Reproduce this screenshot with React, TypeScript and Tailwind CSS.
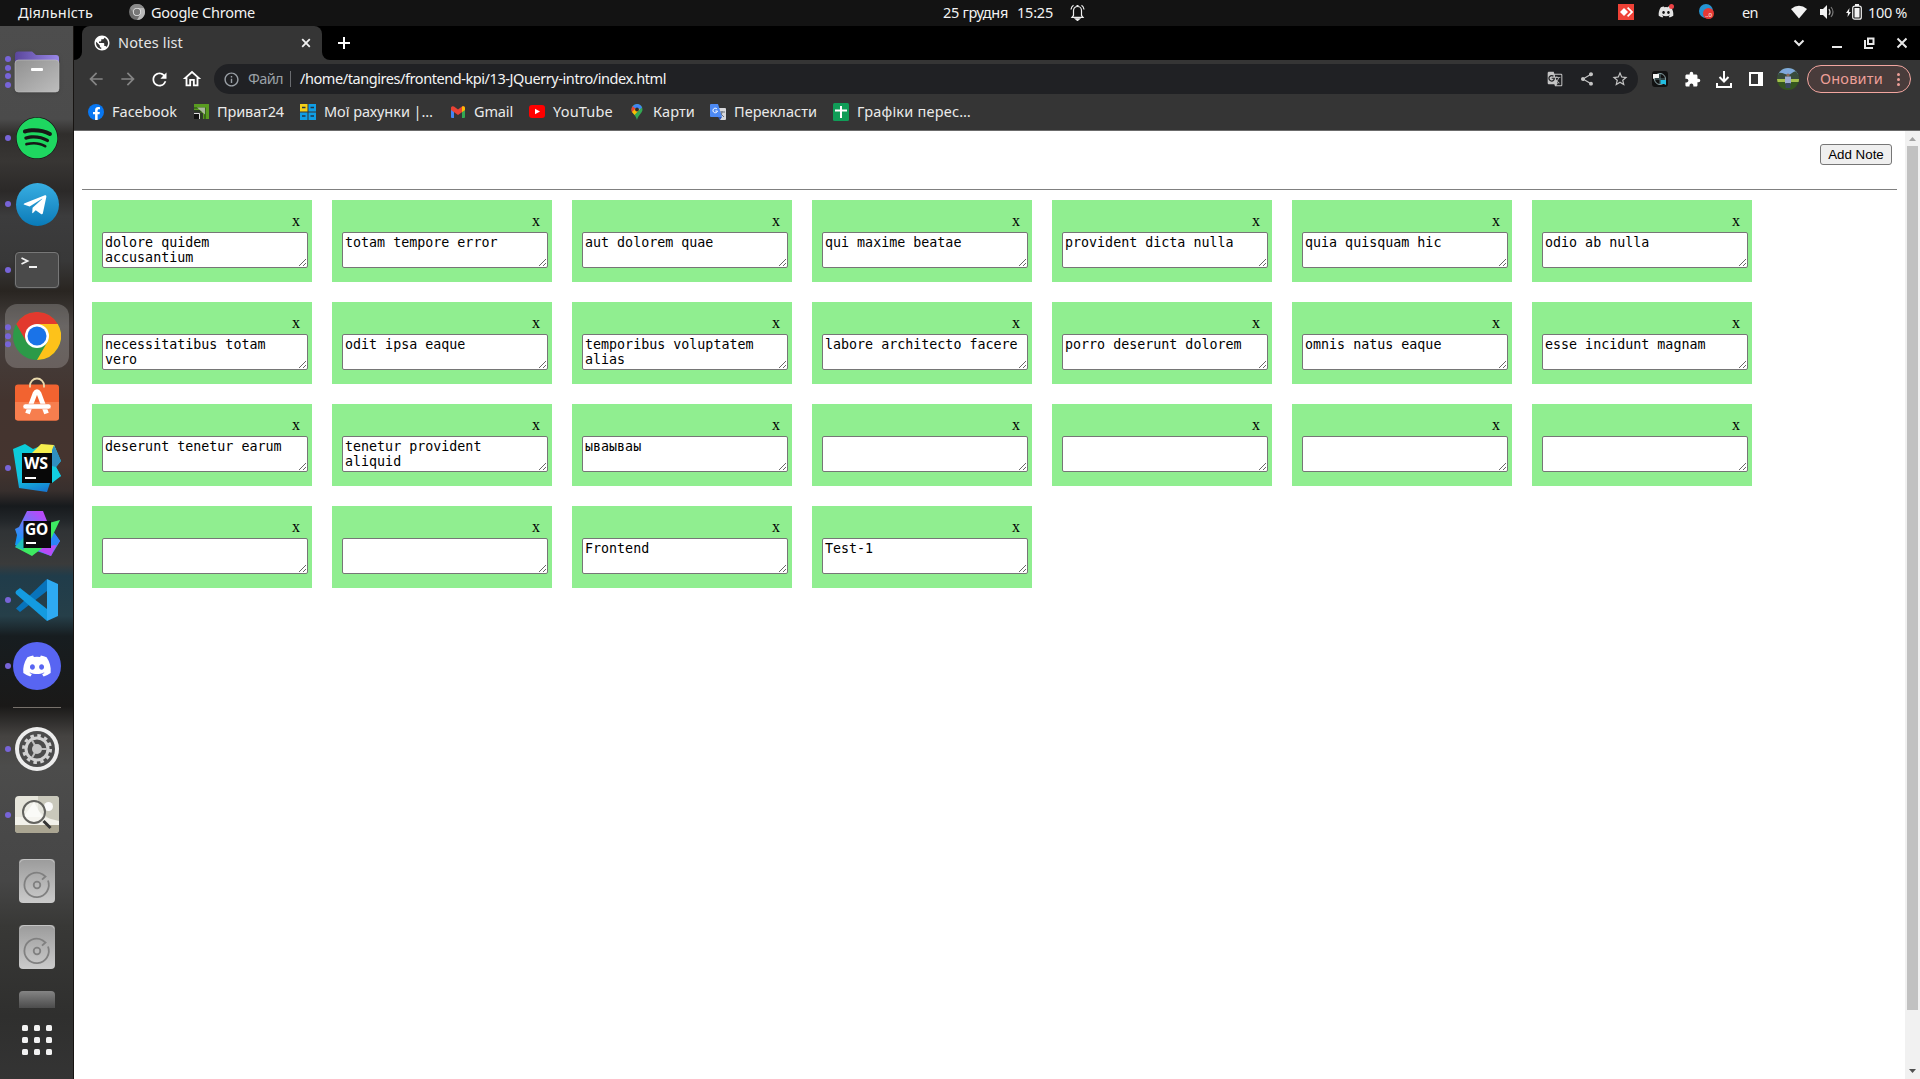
import React, { useLayoutEffect, useRef } from "react";
import { FaSpotify, FaTelegramPlane, FaDiscord, FaFacebookF } from "react-icons/fa";
import {
  MdGTranslate,
  MdShare,
  MdStarBorder,
  MdExtension,
  MdInfoOutline,
  MdRefresh,
  MdArrowBack,
  MdArrowForward,
  MdOutlineHome,
  MdPublic,
} from "react-icons/md";

const notes: string[] = [
  "dolore quidem accusantium",
  "totam tempore error",
  "aut dolorem quae",
  "qui maxime beatae",
  "provident dicta nulla",
  "quia quisquam hic",
  "odio ab nulla",
  "necessitatibus totam vero",
  "odit ipsa eaque",
  "temporibus voluptatem alias",
  "labore architecto facere",
  "porro deserunt dolorem",
  "omnis natus eaque",
  "esse incidunt magnam",
  "deserunt tenetur earum",
  "tenetur provident aliquid",
  "ываываы",
  "",
  "",
  "",
  "",
  "",
  "",
  "Frontend",
  "Test-1",
];

/* A label whose tracking is adjusted so that it fills the given width. */
function Label({ children, width, className = "" }: { children: string; width: number; className?: string }) {
  const ref = useRef<HTMLSpanElement>(null);
  useLayoutEffect(() => {
    const el = ref.current;
    if (!el) return;
    el.style.letterSpacing = "0px";
    const natural = el.getBoundingClientRect().width;
    el.style.letterSpacing = `${(width - natural) / children.length}px`;
  }, [children, width]);
  return (
    <span className="block shrink-0" style={{ width }}>
      <span ref={ref} className={"inline-block whitespace-pre " + className}>
        {children}
      </span>
    </span>
  );
}

function ChromeLogo({ size, mono = false }: { size: number; mono?: boolean }) {
  const c = mono ? ["#8b8b8b", "#6f6f6f", "#b9b9b9", "#777", "#e4e4e4"] : ["#e2392e", "#2c9a48", "#fdc21a", "#1a73e8", "#fff"];
  return (
    <svg width={size} height={size} viewBox="0 0 48 48">
      <circle cx="24" cy="24" r="24" fill={c[1]} />
      <path d="M3.2 12A24 24 0 0 1 44.8 12L24 12 13.6 30Z" fill={c[0]} />
      <path d="M44.8 12A24 24 0 0 1 24 48L34.4 30 24 12Z" fill={c[2]} />
      <circle cx="24" cy="24" r="12" fill={c[4]} />
      <circle cx="24" cy="24" r="9.5" fill={c[3]} />
    </svg>
  );
}

function TopBar() {
  return (
    <header className="flex h-[26px] shrink-0 items-center bg-[#131313] text-[14.5px] leading-[24px] text-[#f2f2f2]">
      <div className="ml-[18px] w-[111px] pb-0.5">
        <Label width={75}>Діяльність</Label>
      </div>
      <div className="mr-1.5 flex h-4 w-4 -translate-y-px items-center">
        <ChromeLogo size={16} mono />
      </div>
      <div className="pb-0.5">
        <Label width={104}>Google Chrome</Label>
      </div>
      <div className="ml-[688px] flex pb-0.5">
        <Label width={65}>25 грудня</Label>
        <span className="w-[9px]" />
        <Label width={36}>15:25</Label>
      </div>
      <svg className="ml-[17px] -translate-y-px" width="15" height="17" viewBox="0 0 15 17" fill="none" stroke="#eee" strokeWidth="1.2">
        <path d="M3.5 11.5V6.5a4 4 0 0 1 8 0v5l1.5 1.8H2z" />
        <path d="M1 5.5Q1.3 2.6 3.5 1.2M14 5.5Q13.7 2.6 11.500 1.2M6.500 1.500h2" />
        <path d="M5.500 14.800h4L7.500 16.500z" fill="#eee" />
      </svg>
      <div className="ml-[533px] flex h-4 w-4 -translate-y-px items-center justify-center bg-[#ef4136]">
        <svg width="14" height="10" viewBox="0 0 14 10" fill="#fff">
          <path d="M5 1l4 4-4 4-4-4z" />
          <path d="M8 1.200l1.200-1.200 5 5-5 5L8 8.800 11.800 5z" />
        </svg>
      </div>
      <div className="relative ml-6 h-4 w-4 -translate-y-px">
        <FaDiscord size={16} color="#e3e3e3" />
        <span className="absolute right-0 top-0 h-[5px] w-[5px] rounded-full bg-[#ed4245]" />
      </div>
      <div className="relative ml-[25px] h-4 w-4">
        <span className="absolute -top-px left-0 h-[14px] w-[14px] rounded-full bg-[#2594d2]" />
        <span className="absolute left-1 top-[3px] flex h-[11px] w-[11px] items-end justify-center rounded-full bg-[#e53935] text-[6px] leading-[8px] text-white">
          ..0
        </span>
      </div>
      <div className="ml-[27px] w-[49px] pb-0.5">
        <Label width={16}>en</Label>
      </div>
      <svg className="-translate-y-px" width="16" height="14" viewBox="0 0 16 14" fill="#f2f2f2">
        <path d="M0 4Q8-2.500 16 4L8 13.500z" />
      </svg>
      <svg className="ml-[12px] -translate-y-px" width="16" height="16" viewBox="0 0 16 16">
        <path d="M1 5h3l4-4v14l-4-4H1z" fill="#f2f2f2" />
        <path d="M10 5q2 3 0 6" stroke="#ccc" strokeWidth="1.200" fill="none" />
        <path d="M12 3q4 5 0 10" stroke="#777" strokeWidth="1.200" fill="none" />
      </svg>
      <svg className="ml-2.5 -translate-y-px" width="18" height="16" viewBox="0 0 18 16">
        <path d="M4.500 4L1 9h2l-.5 4L6 8H4z" fill="#f2f2f2" />
        <rect x="7.700" y="2.200" width="8.600" height="13" rx="2" fill="none" stroke="#f2f2f2" strokeWidth="1.200" />
        <rect x="9.500" y="4" width="5" height="9.500" fill="#f2f2f2" />
        <rect x="10" y="0" width="4" height="2" fill="#f2f2f2" />
      </svg>
      <div className="ml-[5px] pb-0.5">
        <Label width={39}>100 %</Label>
      </div>
    </header>
  );
}

function Dots({ n }: { n: number }) {
  return (
    <span className="absolute left-[5px] top-1/2 flex -translate-y-1/2 flex-col gap-[2.700px]">
      {Array.from({ length: n }, (_, i) => (
        <span key={i} className="block h-1.5 w-1.5 rounded-full bg-[#7764d8]" />
      ))}
    </span>
  );
}

function DockItem({ dots = 0, active = false, children }: { dots?: number; active?: boolean; children: React.ReactNode }) {
  return (
    <div className="relative flex h-[66px] w-[74px] shrink-0 items-center justify-center">
      <span className={"flex h-16 w-16 items-center justify-center rounded-xl " + (active ? "bg-white/20" : "")}>{children}</span>
      <Dots n={dots} />
    </div>
  );
}

function Disk() {
  return (
    <svg width="36" height="44" viewBox="0 0 36 44">
      <defs>
        <linearGradient id="disk" x1="0" y1="0" x2="0" y2="1">
          <stop offset="0" stopColor="#9b9b9b" />
          <stop offset="1" stopColor="#cbcbcb" />
        </linearGradient>
      </defs>
      <rect width="36" height="44" rx="4" fill="url(#disk)" />
      <path d="M1 3.500Q2 .5 5 .5h26q3 0 4 3" stroke="#c4c4c4" fill="none" />
      <path d="M29 21.500A12.200 12.200 0 1 1 23.500 15.200l3 2.300-3.500 3.200" fill="none" stroke="#808080" strokeWidth="1.800" />
      <circle cx="18" cy="26" r="3.300" fill="none" stroke="#808080" strokeWidth="1.800" />
    </svg>
  );
}

function Gear() {
  return (
    <svg width="46" height="46" viewBox="0 0 46 46">
      <circle cx="23" cy="23" r="22" fill="#ededed" />
      <circle cx="23" cy="23" r="18" fill="#4c4c4c" />
      <circle cx="23" cy="23" r="13.500" fill="none" stroke="#d2d2d2" strokeWidth="3" strokeDasharray="3.530 3.530" />
      <circle cx="23" cy="23" r="11" fill="none" stroke="#d2d2d2" strokeWidth="3" />
      <path d="M23 23H33M23 23l-5-8.700M23 23l-5 8.700" stroke="#bdbdbd" strokeWidth="2" />
      <circle cx="23" cy="23" r="5" fill="#c7c7c7" />
    </svg>
  );
}

function Dock() {
  return (
    <aside className="flex w-[74px] shrink-0 flex-col border-r border-[#171412] bg-[linear-gradient(180deg,#4d4d4d_0px,#4b4b4b_93px,#302e2c_108px,#383634_135px,#2b2928_165px,#3c3c3d_190px,#383838_235px,#292521_265px,#45403e_300px,#43342f_375px,#45342f_440px,#372f2d_465px,#171a1d_480px,#23272a_495px,#303335_505px,#3a3b3b_538px,#203c4a_550px,#263f49_590px,#171d20_610px,#1a1918_680px,#454341_710px,#4c4c4b_740px,#494949_790px,#464646_855px,#383836_900px,#2f2f2e_990px,#343434_1053px)] pt-[13px]">
      <DockItem dots={4}>
        <svg width="46" height="44" viewBox="0 0 46 44" className="drop-shadow">
          <defs>
            <linearGradient id="folder" x1="0" y1="0" x2="1" y2="1">
              <stop stopColor="#919191" />
              <stop offset="1" stopColor="#bdbdbd" />
            </linearGradient>
            <linearGradient id="back" x1="0" x2="1">
              <stop stopColor="#5a469b" />
              <stop offset="1" stopColor="#9988e8" />
            </linearGradient>
          </defs>
          <path d="M1 20V5q0-3.500 3-3.500h14l4 3.500h20q3 0 3 3v12z" fill="url(#back)" />
          <rect x="1" y="10" width="44" height="32" rx="3.500" fill="url(#folder)" stroke="#c2c2c2" strokeWidth=".6" />
          <rect x="17" y="18" width="12" height="3" rx="1" fill="#fff" />
        </svg>
      </DockItem>
      <DockItem dots={1}>
        <span className="flex h-[42px] w-[42px] items-center justify-center rounded-full bg-[#171717]">
          <FaSpotify size={42} color="#1ed760" />
        </span>
      </DockItem>
      <DockItem dots={1}>
        <span className="flex h-[43px] w-[43px] items-center justify-center rounded-full bg-linear-to-b from-[#37aee2] to-[#087bb8]">
          <FaTelegramPlane size={26} color="#fff" className="-translate-x-[2px] translate-y-px" />
        </span>
      </DockItem>
      <DockItem dots={1}>
        <span className="h-[36px] w-[44px] rounded border border-[#777] bg-[#4a4a4a] shadow-[0_0_1px_1px_#333]">
          <svg width="42" height="34" viewBox="0 0 42 34" fill="none" stroke="#f2f2f2" strokeWidth="1.800">
            <path d="M5.500 5l6 3-6 3M13 14h8" />
          </svg>
        </span>
      </DockItem>
      <DockItem dots={3} active>
        <ChromeLogo size={48} />
      </DockItem>
      <DockItem>
        <svg width="46" height="46" viewBox="0 0 46 46" className="-translate-y-[3px]">
          <rect x="1" y="8.500" width="44" height="36" rx="3" fill="#f26330" />
          <path d="M1 26h44v15.500q0 3-3 3H4q-3 0-3-3z" fill="#f77e4e" />
          <path d="M16 11.500V9.500a7 7 0 0 1 14 0v2" fill="none" stroke="#ead9ac" strokeWidth="1.800" />
          <path d="M13.500 37.500l7.500-20q2-3.500 4 0l7.500 20" fill="none" stroke="#fff" strokeWidth="4.800" />
          <rect x="9" y="28" width="28" height="5" rx="2.500" fill="#fff" stroke="#f08358" strokeWidth=".5" />
        </svg>
      </DockItem>
      <DockItem dots={1}>
        <span className="relative block h-12 w-12">
          <svg width="48" height="48" viewBox="0 0 48 48">
            <defs>
              <linearGradient id="ws" x1=".3" y1="0" x2=".6" y2="1">
                <stop stopColor="#0bccd8" />
                <stop offset=".6" stopColor="#12c4e0" />
                <stop offset="1" stopColor="#1778d2" />
              </linearGradient>
            </defs>
            <path d="M0 5L12 0l8 5 10-4 11 0 7 16-5 6 5 9-11 7-3 9-28-4z" fill="url(#ws)" />
            <path d="M19 9l9-9 13 1 3 8z" fill="#f5ee4e" />
            <path d="M41 1l7 16-5 6-4 3V6z" fill="#2f8fc0" />
            <path d="M39 22l4 1 5 9-9 7z" fill="#12cfe0" />
            <rect x="9" y="9" width="30" height="30" fill="#080808" />
            <rect x="12" y="33" width="11" height="2" fill="#fff" />
          </svg>
          <span className="absolute left-[11px] top-[9.5px] text-[16px] font-bold leading-[18px] tracking-[-0.2px] text-white">WS</span>
        </span>
      </DockItem>
      <DockItem>
        <span className="relative block h-12 w-12">
          <svg width="48" height="48" viewBox="0 0 48 48">
            <defs>
              <linearGradient id="go" x1="0" y1=".6" x2=".5" y2="0">
                <stop stopColor="#1396f5" />
                <stop offset=".5" stopColor="#6a78f8" />
                <stop offset="1" stopColor="#b74af8" />
              </linearGradient>
            </defs>
            <path d="M2 19L6 17 14 1h16l4 10 4 8 9 12-9 15-20-7-4 2-12-6 2-10z" fill="url(#go)" />
            <path d="M38 18l9 13-4 5H34z" fill="#2b86f8" />
            <path d="M28 37l15-2-5 11-12-5z" fill="#b84bf6" />
            <path d="M36 13l11-3-9 19zM2 37l10-1h20l-13 10z" fill="#3dea62" />
            <path d="M2 37l9-10v13z" fill="#22c0b8" />
            <rect x="10.500" y="11" width="27.500" height="27" fill="#0b0b0e" />
            <rect x="13" y="32" width="10" height="2" fill="#fff" />
          </svg>
          <span className="absolute left-[12px] top-[10px] text-[15.500px] font-bold leading-[18px] tracking-[-0.300px] text-white">GO</span>
        </span>
      </DockItem>
      <DockItem dots={1}>
        <svg width="44" height="44" viewBox="0 0 44 44">
          <path d="M1 30.500L32 1v12L5 34z" fill="#0873bb" />
          <path d="M1 13l4-3 27 21v12L1 16q-1-1 0-3z" fill="#149be0" />
          <path d="M32 1l11 5v32l-11 5z" fill="#2eaaf2" />
        </svg>
      </DockItem>
      <DockItem dots={1}>
        <span className="flex h-12 w-12 items-center justify-center rounded-full bg-[#5865f2]">
          <FaDiscord size={30} color="#fff" />
        </span>
      </DockItem>
      <div className="ml-[13px] mt-[8px] h-px w-12 shrink-0 bg-[#77716b]" />
      <div className="h-2 shrink-0" />
      <DockItem dots={1}>
        <Gear />
      </DockItem>
      <DockItem dots={1}>
        <svg width="46" height="40" viewBox="0 0 46 40">
          <rect x="1" y="1" width="44" height="37" rx="4" fill="#e6e5db" />
          <path d="M24 1h18q3 0 3 3v26L24 16z" fill="#c9c8bb" />
          <path d="M8 24L20 7l11 20z" fill="#fff" />
          <path d="M1 30h44v5q0 3-3 3H4q-3 0-3-3z" fill="#aaa592" />
          <path d="M1 22h28l16 4v4H1z" fill="#f2f1ea" />
          <circle cx="34.500" cy="11.500" r="4.500" fill="#fafafa" />
          <circle cx="20" cy="17" r="11" fill="#f6f6f1" fillOpacity=".6" stroke="#63635f" strokeWidth="2" />
          <path d="M29.500 26l7 7" stroke="#343434" strokeWidth="3" />
        </svg>
      </DockItem>
      <DockItem>
        <Disk />
      </DockItem>
      <DockItem>
        <Disk />
      </DockItem>
      <div className="ml-[19px] mt-[11px] h-[17px] w-9 shrink-0 rounded-t bg-linear-to-b from-[#858585] to-[#4c4c4c]" />
      <div className="ml-[22px] mt-[17px] grid w-[30px] grid-cols-3 gap-[6px]">
        {Array.from({ length: 9 }, (_, i) => (
          <span key={i} className="h-1.5 w-1.5 rounded-[1.500px] bg-[#f2f2f2]" />
        ))}
      </div>
    </aside>
  );
}

function TabStrip() {
  return (
    <div className="flex h-[34px] items-center bg-black text-[#e6e6e6]">
      <div className="h-full w-2 bg-[#353535]">
        <div className="h-full rounded-br-lg bg-black" />
      </div>
      <div className="flex h-full w-[240px] items-center rounded-t-lg bg-[#353535] pl-[11px] pr-[9px] text-[14.500px]">
        <MdPublic size={18} color="#fff" />
        <span className="w-[7px]" />
        <Label width={65}>Notes list</Label>
        <svg className="ml-auto" width="14" height="14" viewBox="0 0 14 14" stroke="#f1f1f1" strokeWidth="1.800">
          <path d="M3.200 3.200l7.600 7.600M10.800 3.200l-7.600 7.600" />
        </svg>
      </div>
      <div className="h-full w-2 bg-[#353535]">
        <div className="h-full rounded-bl-lg bg-black" />
      </div>
      <svg className="ml-2" width="12" height="12" viewBox="0 0 12 12" stroke="#fff" strokeWidth="2">
        <path d="M6 0v12M0 6h12" />
      </svg>
      <svg className="ml-auto mr-[13px]" width="114" height="14" viewBox="0 0 114 14" fill="none" stroke="#e8e8e8" strokeWidth="2">
        <path d="M1.500 4.500L6 9l4.500-4.500M39 11h10" />
        <path d="M75 2.500h5.500V8H75zM72 4v8h8" />
        <path d="M104.500 2.500l9 9M113.500 2.500l-9 9" />
      </svg>
    </div>
  );
}

function Toolbar() {
  return (
    <div className="flex h-[38px] items-center text-[14.500px]">
      <MdArrowBack size={20} color="#858585" className="ml-3" />
      <MdArrowForward size={20} color="#858585" className="ml-3" />
      <MdRefresh size={21} color="#fff" className="ml-[11px]" />
      <MdOutlineHome size={22} color="#fff" className="ml-[11px]" />
      <div className="ml-[11px] flex h-[30px] w-[1424px] items-center rounded-full bg-[#202124] pl-[9px] pr-[9px]">
        <MdInfoOutline size={17} color="#9aa0a6" />
        <span className="w-[8px]" />
        <Label width={35} className="text-[#9aa0a6]">Файл</Label>
        <span className="ml-[7px] mr-[9px] h-4 w-px bg-[#6a6c70]" />
        <Label width={366} className="text-[#f4f4f4]">/home/tangires/frontend-kpi/13-JQuerry-intro/index.html</Label>
        <div className="ml-auto flex items-center gap-4 text-[#c4c4c4]">
          <MdGTranslate size={16} />
          <MdShare size={16} />
          <MdStarBorder size={18} />
        </div>
      </div>
      <svg className="ml-[14px]" width="16" height="16" viewBox="0 0 16 16">
        <rect width="16" height="16" rx="3" fill="#111" />
        <circle cx="8" cy="8" r="5.500" fill="none" stroke="#8aa3a7" strokeWidth="1" />
        <path d="M3 8h10M8 3v10" stroke="#527277" />
        <path d="M1 3h6v4H3L1 8z" fill="#f3f3f3" />
        <path d="M8.500 9H14v5l-2-1H8.500z" fill="#22bde1" />
      </svg>
      <MdExtension size={17} color="#fff" className="ml-4" />
      <svg className="ml-[15px]" width="16" height="17" viewBox="0 0 16 17" fill="none" stroke="#fff" strokeWidth="2">
        <path d="M8 0v10M3.500 6L8 10.500 12.500 6M1 12v4h14v-4" />
      </svg>
      <svg className="ml-[17px]" width="14" height="14" viewBox="0 0 14 14">
        <path d="M0 0h14v14H0zM2 2v10h7V2z" fill="#fff" fillRule="evenodd" />
      </svg>
      <svg className="ml-[14px]" width="22" height="22" viewBox="0 0 22 22">
        <defs>
          <clipPath id="avatar">
            <circle cx="11" cy="11" r="11" />
          </clipPath>
        </defs>
        <g clipPath="url(#avatar)">
          <rect width="22" height="22" fill="#35561f" />
          <rect width="22" height="7" fill="#80a9dc" />
          <path d="M0 5q4-1 8 1t7-1 7-1v7H0z" fill="#394b3c" />
          <rect y="11" width="22" height="3" fill="#a3bf4c" />
          <circle cx="11" cy="7" r="1.600" fill="#8d6a5a" />
          <path d="M8 8.500h6v7H8z" fill="#9cabd0" />
          <path d="M8.500 15h5v5h-5z" fill="#39465f" />
        </g>
      </svg>
      <div className="ml-2 flex h-7 w-[104px] items-center rounded-full border border-[#f2a6a0] bg-[#493c3b] pl-[12px] text-[14.500px] text-[#ee9f98]">
        <Label width={63}>Оновити</Label>
        <span className="ml-[14px] flex flex-col gap-[2px]">
          <span className="h-[3px] w-[3px] rounded-full bg-[#ee9f98]" />
          <span className="h-[3px] w-[3px] rounded-full bg-[#ee9f98]" />
          <span className="h-[3px] w-[3px] rounded-full bg-[#ee9f98]" />
        </span>
      </div>
    </div>
  );
}

function Bookmark({ icon, text, width, gap }: { icon: React.ReactNode; text: string; width: number; gap: string }) {
  return (
    <div className={"flex shrink-0 items-center " + gap}>
      <span className="mr-2 flex h-4 w-4 items-center justify-center">{icon}</span>
      <Label width={width}>{text}</Label>
    </div>
  );
}

function Bookmarks() {
  return (
    <div className="flex h-[32px] items-start pl-[14px] pt-px text-[14.500px] leading-[25px] text-[#eaeaea]">
      <Bookmark
        gap="mr-4"
        text="Facebook"
        width={65}
        icon={
          <span className="flex h-4 w-4 items-end justify-center rounded-full bg-[#0877f2]">
            <FaFacebookF size={13} color="#fff" />
          </span>
        }
      />
      <Bookmark
        gap="mr-4"
        text="Приват24"
        width={67}
        icon={
          <svg width="15" height="15" viewBox="0 0 15 15">
            <path d="M0 0h15v15H9V9H6V6H0z" fill="#599c20" />
            <path d="M0 4h11v11M0 7h7v8" fill="none" stroke="#254316" strokeWidth="1.200" />
            <path d="M3 3.500h8v7z" fill="#aab89d" />
            <path d="M0 10h5v5H0z" fill="#111" />
            <path d="M0 9.500h5.500V15" fill="none" stroke="#ddd" />
          </svg>
        }
      />
      <Bookmark
        gap="mr-[17px]"
        text="Мої рахунки |…"
        width={109}
        icon={
          <svg width="16" height="16" viewBox="0 0 16 16">
            <path d="M0 0h7.500v7.500H0z" fill="#f3cf18" />
            <path d="M8.500 0H16v7.500H8.500zM0 8.500h7.500V16H0zM8.500 8.500H16V16H8.500z" fill="#109ee5" />
            <path d="M2 3.500h3.500M10.500 3.500H14M2 12h3.500M10.500 12H14" stroke="#234" strokeWidth="1.500" />
          </svg>
        }
      />
      <Bookmark
        gap="mr-4"
        text="Gmail"
        width={39}
        icon={
          <svg width="14" height="12" viewBox="0 0 14 12">
            <path d="M0 2h3v10H1q-1 0-1-1z" fill="#4285f4" />
            <path d="M11 2h3v9q0 1-1 1h-2z" fill="#34a853" />
            <path d="M0 1.500Q1-.5 3 .5l4 3 4-3q2-1 3 1V4L7 9 0 4z" fill="#ea4335" />
            <path d="M11 .5q2-1 3 1V4l-3 2z" fill="#fbbc04" />
          </svg>
        }
      />
      <Bookmark
        gap="mr-4"
        text="YouTube"
        width={60}
        icon={
          <svg width="16" height="13" viewBox="0 0 16 13">
            <rect width="16" height="13" rx="3" fill="#f00" />
            <path d="M6 3.800l5 2.700-5 2.700z" fill="#fff" />
          </svg>
        }
      />
      <Bookmark
        gap="mr-[15px]"
        text="Карти"
        width={42}
        icon={
          <svg width="12" height="16" viewBox="0 0 12 16">
            <path d="M6 0a5.500 5.500 0 0 1 5.500 5.500C11.500 9 7.500 10.500 6 16 4.500 10.500.5 9 .5 5.500A5.500 5.500 0 0 1 6 0z" fill="#34a853" />
            <path d="M6 0a5.500 5.500 0 0 1 5 3.500L6 8 1.500 2.500Q3 .2 6 0z" fill="#4285f4" />
            <path d="M1.700 2.300L5 5 1 8.500Q-.5 5 1.700 2.300z" fill="#ea4335" />
            <path d="M1 8l4-4 4 1-5.500 6z" fill="#fbbc04" />
            <circle cx="6" cy="5.500" r="1.900" fill="#2b2b2b" />
          </svg>
        }
      />
      <Bookmark
        gap="mr-4"
        text="Перекласти"
        width={83}
        icon={
          <svg width="16" height="16" viewBox="0 0 16 16">
            <path d="M6 4h9q1 0 1 1v10q0 1-1 1h-5z" fill="#d8d9dc" />
            <path d="M9 8h6M12 7v1q0 4-3 5M10 9l4 4" stroke="#68717d" fill="none" />
            <path d="M1 0h7l4 13H1q-1 0-1-1V1q0-1 1-1z" fill="#4d8af5" />
            <path d="M8 13h4l-2 3z" fill="#2d57bb" />
            <path d="M7 5a2.300 2.300 0 1 0 .5 2H5.300" stroke="#fff" fill="none" />
          </svg>
        }
      />
      <Bookmark
        gap=""
        text="Графіки перес…"
        width={114}
        icon={
          <svg width="16" height="18" viewBox="0 0 16 18">
            <rect width="16" height="18" rx="1.500" fill="#109d58" />
            <path d="M8 3v12M2 7.500h12" stroke="#fff" strokeWidth="2" />
          </svg>
        }
      />
    </div>
  );
}

function Note({ text }: { text: string }) {
  return (
    <div className="h-[82px] w-[220px] bg-[#90ee90] pl-2.5 pr-1 pt-3">
      <div className="h-5 pr-2 text-right font-['Liberation_Serif',serif] text-[16px] leading-[18px]">x</div>
      <textarea
        defaultValue={text}
        spellCheck={false}
        className="block h-[36px] w-[206px] resize overflow-hidden rounded-[2px] border border-[#767676] bg-white px-0.5 py-0.5 font-['DejaVu_Sans_Mono',monospace] text-[13.333px] leading-[15px] text-black"
      />
    </div>
  );
}

function Page() {
  return (
    <div className="flex min-h-0 flex-1 bg-white text-black">
      <main className="flex-1 pl-2 pr-2">
        <div className="flex h-[58px] justify-end pr-[5px] pt-[13px]">
          <button className="flex h-[21px] w-[72px] items-center justify-center rounded-[3px] border border-[#767676] bg-[#efefef] font-['Liberation_Sans',sans-serif] text-[13.333px] leading-[15px]">
            Add Note
          </button>
        </div>
        <div className="h-px bg-[#808080]" />
        <div className="ml-2.5 mt-2.5 grid grid-cols-[repeat(7,220px)] gap-5">
          {notes.map((t, i) => (
            <Note key={i} text={t} />
          ))}
        </div>
      </main>
      <div className="flex w-[15px] flex-col items-center bg-[#f1f1f1]">
        <svg width="15" height="15" viewBox="0 0 15 15" fill="#a3a3a3">
          <path d="M4 10l3.500-4 3.500 4z" />
        </svg>
        <div className="h-[864px] w-[11px] bg-[#c1c1c1]" />
        <svg className="mt-auto" width="15" height="15" viewBox="0 0 15 15" fill="#505050">
          <path d="M4 5h7L7.500 9z" />
        </svg>
      </div>
    </div>
  );
}

export default function App() {
  return (
    <div className="flex h-[1079px] w-[1920px] flex-col overflow-hidden font-['Noto_Sans',sans-serif]">
      <TopBar />
      <div className="flex min-h-0 flex-1">
        <Dock />
        <div className="flex min-w-0 flex-1 flex-col">
          <TabStrip />
          <div className="h-[71px] shrink-0 border-b border-[#6b6b6b] bg-[#353535]">
            <Toolbar />
            <Bookmarks />
          </div>
          <Page />
        </div>
      </div>
    </div>
  );
}
